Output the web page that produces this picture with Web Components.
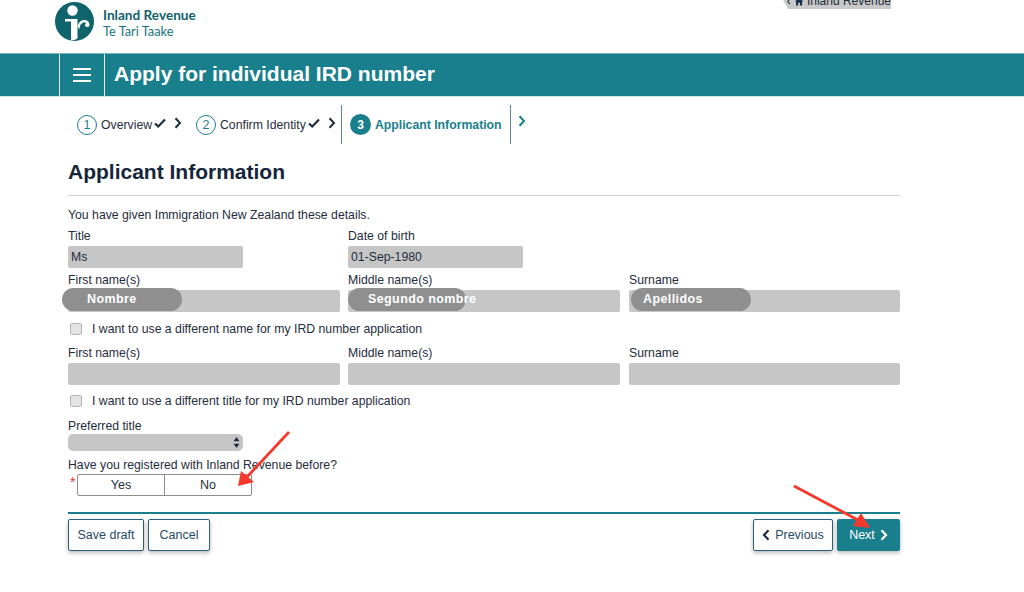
<!DOCTYPE html>
<html lang="en">
<head>
<meta charset="utf-8">
<title>Apply for individual IRD number</title>
<style>
  html, body { margin: 0; background: #fff; }
  body { font-family: "Liberation Sans", Arial, sans-serif; color: #1f2d3d; }
  ir-page { width: 1024px; height: 592px; overflow: hidden; }
</style>
</head>
<body>
<ir-page>
  <ir-masthead></ir-masthead>
  <ir-band>Apply for individual IRD number</ir-band>
  <ir-stepper></ir-stepper>
  <ir-form></ir-form>
  <ir-arrows></ir-arrows>
</ir-page>

<script>
class IrPage extends HTMLElement {
  constructor(){
    super();
    this.attachShadow({ mode: 'open' });
    this.shadowRoot.innerHTML = `
      <style>
        :host{ display: block; position: relative; }
      </style>
      <slot></slot>
    `;
  }
}

class IrMasthead extends HTMLElement {
  constructor(){
    super();
    this.attachShadow({ mode: 'open' });
    this.shadowRoot.innerHTML = `
      <style>
        :host{
          display: flex;
          position: relative;
          align-items: flex-start;
          height: 53px;
          padding: 1px 0 0 55px;
          box-sizing: border-box;
        }
        .words{
          margin: 6px 0 0 8px;
          font-family: Lato, "Open Sans", sans-serif;
          color: #0f636b;
          font-size: 13.6px;
          line-height: 16px;
        }
        .words b{ display: block; font-weight: 700; }
        .words span{ display: block; font-size: 12.8px; color: #1b7480; }
        .back{
          position: absolute;
          left: 782px;
          top: -7px;
          width: 109px;
          height: 16px;
          background: #c9c9c9;
          clip-path: polygon(0 30%, 6px 0, 100% 0, 100% 100%, 6px 100%);
          font: 12px/13px "Liberation Sans", sans-serif;
          color: #1f2d3d;
          display: flex;
          align-items: center;
          gap: 4px;
          padding-left: 5px;
          box-sizing: border-box;
          white-space: nowrap;
        }
      </style>
      <svg width="40" height="41" viewBox="0 0 40 41">
        <circle cx="19.5" cy="20.5" r="19.5" fill="#0f636b"/>
        <circle cx="17.5" cy="9.5" r="5.2" fill="#fff"/>
        <path d="M10 18h12.500v19.500q-3 2-6.500 2v-19h-6z" fill="#fff"/>
        <path d="M22.500 25q2-6 6.500-6 5 0 5.500 4.500 0 2.500-2.500 2.500-2 0-2-2 0-1.500 1.200-1.700-1-1.300-2.700-.8-4 1.200-4 7z" fill="#fff"/>
      </svg>
      <div class="words"><b>Inland Revenue</b><span>Te Tari Taake</span></div>
      <div class="back">
        <svg width="5" height="9" viewBox="0 0 5 9"><path d="M4 1L1 4.500l3 3.500" fill="none" stroke="#1f2d3d" stroke-width="1.400"/></svg>
        <svg width="11" height="11" viewBox="0 0 9 9"><path d="M4.500 0L9 4.500H7.800V9H5.500V6h-2v3H1.200V4.500H0z" fill="#14304f"/></svg>
        <span>Inland Revenue</span>
      </div>
    `;
  }
}

class IrBand extends HTMLElement {
  constructor(){
    super();
    this.attachShadow({ mode: 'open' });
    this.shadowRoot.innerHTML = `
      <style>
        :host{
          display: flex;
          height: 44px;
          background: #1a7f8c;
          color: #fff;
          padding-left: 59px;
          border-top: 1px solid #7db5bd;
          border-bottom: 1px solid #cfe3e6;
          box-sizing: border-box;
        }
        .menu{
          display: flex;
          flex-direction: column;
          justify-content: center;
          gap: 4px;
          width: 46px;
          padding: 0 13px;
          box-sizing: border-box;
          border-left: 1px solid #e3f0f1;
          border-right: 1px solid #e3f0f1;
          margin-right: 9px;
          height: 42px;
        }
        .menu i{ display: block; height: 2px; background: #fff; }
        h1{
          margin: 0;
          font: 700 21px/40px "Liberation Sans", sans-serif;
          white-space: nowrap;
        }
      </style>
      <div class="menu"><i></i><i></i><i></i></div>
      <h1><slot></slot></h1>
    `;
  }
}

const chevron = (color) => `<svg width="8" height="12" viewBox="0 0 8 12"><path d="M1.500 1.200L6 6l-4.500 4.800" fill="none" stroke="${color}" stroke-width="2"/></svg>`;
const tick = `<svg width="12" height="10" viewBox="0 0 12 10"><path d="M1 5.500L4.200 8.500 11 1.500" fill="none" stroke="#1f2d3d" stroke-width="2.200"/></svg>`;

class IrStepper extends HTMLElement {
  constructor(){
    super();
    this.attachShadow({ mode: 'open' });
    this.shadowRoot.innerHTML = `
      <style>
        :host{
          display: flex;
          align-items: center;
          height: 39px;
          margin-top: 8px;
          padding-left: 77px;
          font-size: 12.25px;
          color: #1f2d3d;
          white-space: nowrap;
        }
        .num{
          width: 18px;
          height: 18px;
          border: 1px solid #1a7f8c;
          border-radius: 50%;
          display: flex;
          align-items: center;
          justify-content: center;
          font-size: 12.5px;
          color: #1a7f8c;
          margin-right: 4px;
          flex: none;
        }
        .done{ display: flex; align-items: center; }
        .done > svg:first-of-type{ margin: -3px 0 0 2px; }
        .done > svg:last-of-type{ margin: -3px 0 0 8px; }
        .one{ width: 119px; }
        .two{ width: 145px; }
        .now{
          display: flex;
          align-items: center;
          height: 39px;
          width: 170px;
          border-left: 1px solid #5d8a9c;
          border-right: 1px solid #5d8a9c;
          box-sizing: border-box;
          padding-left: 8px;
          color: #1a7f8c;
          font-weight: 700;
        }
        .now .num{
          width: 21px;
          height: 21px;
          background: #1a7f8c;
          color: #fff;
          font-size: 12px;
          border: 0;
        }
        .tail{ margin: -4px 0 0 7px; }
      </style>
      <div class="done one"><span class="num">1</span>Overview${tick}${chevron('#1f2d3d')}</div>
      <div class="done two"><span class="num">2</span>Confirm Identity${tick}${chevron('#1f2d3d')}</div>
      <div class="now"><span class="num">3</span>Applicant Information</div>
      <span class="tail">${chevron('#1a7f8c')}</span>
    `;
  }
}

// label above a grey read only box
class IrField extends HTMLElement {
  constructor(){
    super();
    this.attachShadow({ mode: 'open' });
    const pill = this.getAttribute('pill');
    const pillWidth = this.getAttribute('pill-width') || 120;
    const pillLeft = this.getAttribute('pill-left') || -6;
    const pad = this.getAttribute('pill-pad') || 25;
    this.shadowRoot.innerHTML = `
      <style>
        :host{ display: block; position: relative; }
        label{ display: block; font-size: 12.25px; line-height: 15px; color: #1f2d3d; height: 15px; }
        .box{
          height: 22px;
          margin-top: 2px;
          background: #c6c6c6;
          border-radius: 2px;
          font-size: 12.25px;
          line-height: 23px;
          padding-left: 3px;
          color: #1f2d3d;
        }
        :host([short]) .box{ width: 175px; box-sizing: border-box; }
        .pill{
          position: absolute;
          left: ${pillLeft}px;
          top: 15px;
          width: ${pillWidth}px;
          height: 23px;
          border-radius: 12px;
          background: #8f8f8f;
          color: #fff;
          font-weight: 700;
          font-size: 12.5px;
          line-height: 22px;
          padding-left: ${pad}px;
          box-sizing: border-box;
          white-space: nowrap;
          letter-spacing: .4px;
        }
      </style>
      <label>${this.getAttribute('label')}</label>
      <div class="box"><slot></slot></div>
      ${pill ? `<div class="pill">${pill}</div>` : ''}
    `;
  }
}

class IrCheck extends HTMLElement {
  constructor(){
    super();
    this.attachShadow({ mode: 'open' });
    this.shadowRoot.innerHTML = `
      <style>
        :host{
          display: flex;
          align-items: center;
          gap: 10px;
          height: 16px;
          padding-left: 2px;
          font-size: 12.25px;
          color: #1f2d3d;
        }
        i{
          display: block;
          width: 12px;
          height: 12px;
          box-sizing: border-box;
          background: #e4e4e4;
          border: 1px solid #b5b5b5;
          border-radius: 2px;
        }
      </style>
      <i></i><slot></slot>
    `;
  }
}

class IrSelect extends HTMLElement {
  constructor(){
    super();
    this.attachShadow({ mode: 'open' });
    this.shadowRoot.innerHTML = `
      <style>
        :host{ display: block; font-size: 12.25px; color: #1f2d3d; }
        label{ display: block; line-height: 14px; height: 15px; }
        .box{
          display: flex;
          justify-content: flex-end;
          align-items: center;
          width: 175px;
          height: 17px;
          padding-right: 3px;
          box-sizing: border-box;
          background: #c6c6c6;
          border-radius: 5px;
        }
      </style>
      <label><slot></slot></label>
      <div class="box"><svg width="7" height="11" viewBox="0 0 7 11"><path d="M3.500 0L6.500 4.200H.5zM3.500 11L.5 6.800H6.500z" fill="#1f2d3d"/></svg></div>
    `;
  }
}

class IrToggle extends HTMLElement {
  constructor(){
    super();
    this.attachShadow({ mode: 'open' });
    this.shadowRoot.innerHTML = `
      <style>
        :host{ display: block; position: relative; font-size: 12.25px; color: #1f2d3d; }
        label{ display: block; line-height: 14px; height: 15px; }
        .row{ display: flex; width: 175px; height: 22px; margin: 1px 0 0 9px; box-sizing: border-box; border: 1px solid #8c8c8c; border-radius: 2px; background: #fff; }
        .row span{ flex: 1; text-align: center; line-height: 21px; font-size: 12.5px; }
        .row span + span{ border-left: 1px solid #8c8c8c; }
        .star{ position: absolute; left: 2px; top: 17px; color: #d9342b; font-size: 14px; line-height: 14px; }
      </style>
      <label><slot></slot></label>
      <span class="star">*</span>
      <div class="row"><span>Yes</span><span>No</span></div>
    `;
  }
}

class IrButton extends HTMLElement {
  constructor(){
    super();
    this.attachShadow({ mode: 'open' });
    this.shadowRoot.innerHTML = `
      <style>
        :host{
          display: flex;
          align-items: center;
          justify-content: center;
          gap: 5px;
          height: 32px;
          box-sizing: border-box;
          background: #fff;
          color: #1f4a68;
          border: 1px solid #2c5f7c;
          border-radius: 2px;
          font-size: 12.5px;
          box-shadow: 0 2px 4px rgba(0,0,0,.28);
          white-space: nowrap;
        }
        :host([primary]){ background: #1a7f8c; border-color: #1a7f8c; color: #fff; }
      </style>
      <slot></slot>
    `;
  }
}

class IrForm extends HTMLElement {
  constructor(){
    super();
    this.attachShadow({ mode: 'open' });
    this.shadowRoot.innerHTML = `
      <style>
        :host{
          display: block;
          width: 832px;
          margin: 15px 0 0 68px;
          font-size: 12.25px;
          color: #1f2d3d;
        }
        h2{
          margin: 0;
          font: 700 21px/25px "Liberation Sans", sans-serif;
          color: #16263a;
          padding-bottom: 11px;
          border-bottom: 1px solid #cfcfcf;
        }
        p{ margin: 0; padding-top: 12px; line-height: 14px; }
        .grid{ display: grid; grid-template-columns: 272px 272px 272px; column-gap: 8px; }
        .grid > :nth-child(3){ margin-left: 1px; }
        .top{ margin-top: 7px; }
        .names{ margin-top: 5px; }
        .names2{ margin-top: 9px; }
        .sel{ margin-top: 10px; }
        .tog{ margin-top: 7px; }
        .actions{
          display: flex;
          gap: 4px;
          margin-top: 16px;
          padding-top: 5px;
          border-top: 2px solid #1a7f8c;
        }
        .actions .push{ margin-left: auto; }
        .save{ width: 76px; }
        .cancel{ width: 62px; }
        .prev{ width: 80px; }
        .next{ width: 63px; }
      </style>
      <h2>Applicant Information</h2>
      <p>You have given Immigration New Zealand these details.</p>
      <div class="grid top">
        <ir-field short label="Title">Ms</ir-field>
        <ir-field short label="Date of birth">01-Sep-1980</ir-field>
      </div>
      <div class="grid names">
        <ir-field label="First name(s)" pill="Nombre"></ir-field>
        <ir-field label="Middle name(s)" pill="Segundo nombre" pill-width="118" pill-left="0" pill-pad="20"></ir-field>
        <ir-field label="Surname" pill="Apellidos" pill-left="2" pill-pad="12"></ir-field>
      </div>
      <ir-check style="margin-top:9px">I want to use a different name for my IRD number application</ir-check>
      <div class="grid names2">
        <ir-field label="First name(s)"></ir-field>
        <ir-field label="Middle name(s)"></ir-field>
        <ir-field label="Surname"></ir-field>
      </div>
      <ir-check style="margin-top:8px">I want to use a different title for my IRD number application</ir-check>
      <ir-select class="sel">Preferred title</ir-select>
      <ir-toggle class="tog">Have you registered with Inland Revenue before?</ir-toggle>
      <div class="actions">
        <ir-button class="save">Save draft</ir-button>
        <ir-button class="cancel">Cancel</ir-button>
        <ir-button class="prev push"><svg width="8" height="12" viewBox="0 0 8 12"><path d="M6.500 1.200L2 6l4.500 4.800" fill="none" stroke="#1f2d3d" stroke-width="2.200"/></svg>Previous</ir-button>
        <ir-button class="next" primary>Next<svg width="8" height="12" viewBox="0 0 8 12"><path d="M1.500 1.200L6 6l-4.500 4.800" fill="none" stroke="#fff" stroke-width="2.200"/></svg></ir-button>
      </div>
    `;
  }
}

// red annotation arrows painted over the form
class IrArrows extends HTMLElement {
  constructor(){
    super();
    this.attachShadow({ mode: 'open' });
    this.shadowRoot.innerHTML = `
      <style>
        :host{ position: absolute; inset: 0; pointer-events: none; }
        svg{ display: block; }
      </style>
      <svg width="1024" height="592" viewBox="0 0 1024 592">
        <path d="M289 432L247 477" stroke="#f5382b" stroke-width="2.800" fill="none"/>
        <path d="M238 486L241 471 254 482z" fill="#f5382b"/>
        <path d="M794 486L858 520" stroke="#f5382b" stroke-width="2.800" fill="none"/>
        <path d="M870 528L861 513 853 526z" fill="#f5382b"/>
      </svg>
    `;
  }
}

customElements.define('ir-page', IrPage);
customElements.define('ir-masthead', IrMasthead);
customElements.define('ir-band', IrBand);
customElements.define('ir-stepper', IrStepper);
customElements.define('ir-field', IrField);
customElements.define('ir-check', IrCheck);
customElements.define('ir-select', IrSelect);
customElements.define('ir-toggle', IrToggle);
customElements.define('ir-button', IrButton);
customElements.define('ir-form', IrForm);
customElements.define('ir-arrows', IrArrows);
</script>
</body>
</html>
